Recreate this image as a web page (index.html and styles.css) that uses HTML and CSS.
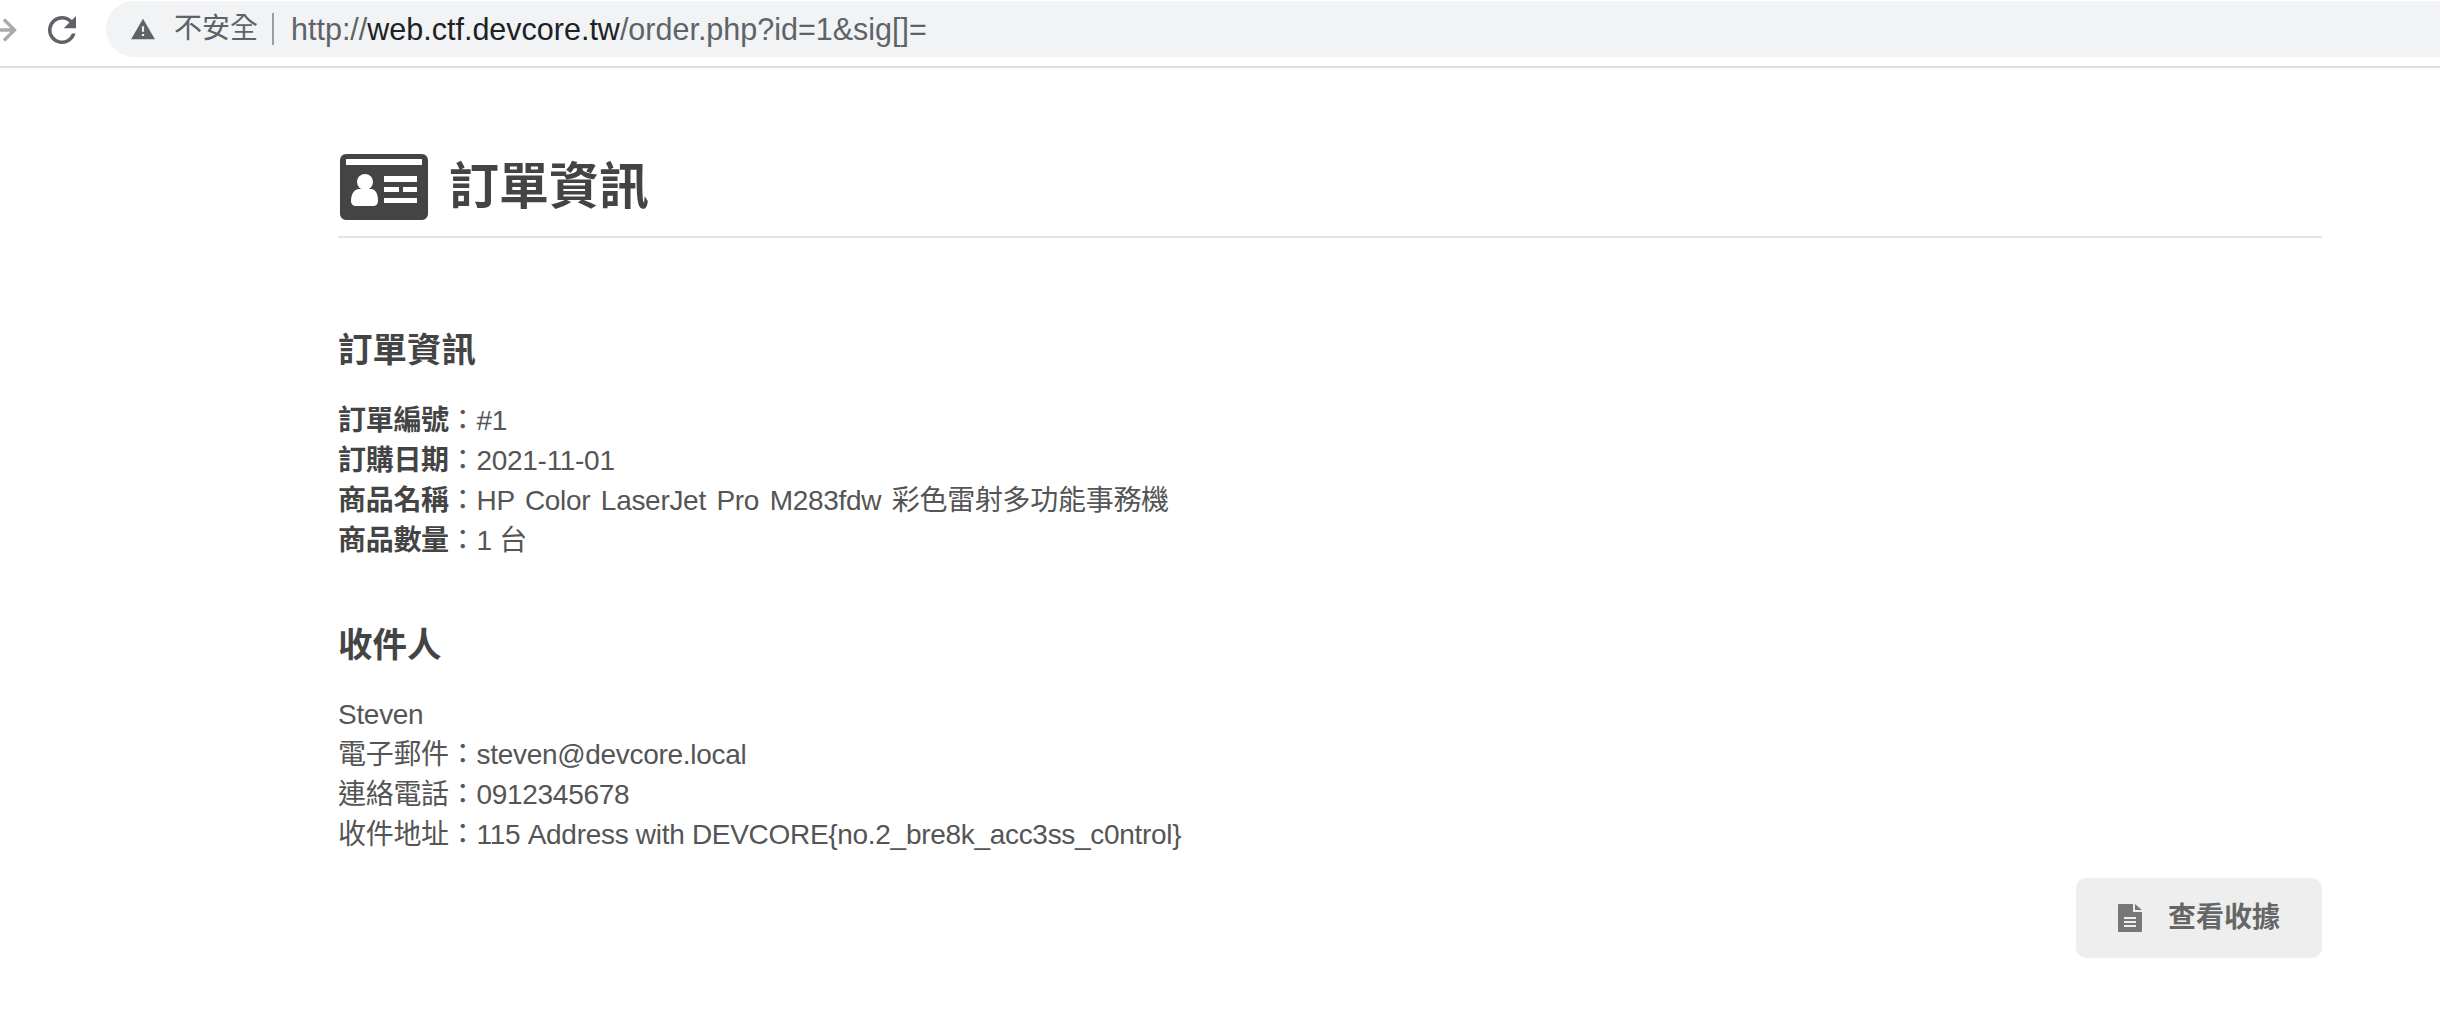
FILE: index.html
```html
<!DOCTYPE html>
<html lang="zh-Hant">
<head>
    <meta charset="UTF-8">
    <title>訂單資訊</title>
    <link rel="stylesheet" href="styles.css">
</head>
<body>
    <div class="toolbar">
        <div class="nav-icons">
            <svg class="forward-icon" viewBox="0 0 24 24" width="36" height="36"><path d="M4 12h15M12 5l7 7-7 7" fill="none" stroke="#aaa" stroke-width="2.2"/></svg>
            <svg class="reload-icon" viewBox="0 0 24 24" width="42" height="42"><path d="M17.65 6.35A7.96 7.96 0 0 0 12 4a8 8 0 1 0 7.73 10h-2.08A6 6 0 1 1 12 6c1.66 0 3.14.69 4.22 1.78L13 11h7V4z" fill="#5f6368"/></svg>
        </div>
        <div class="address-bar">
            <svg class="warn-icon" viewBox="0 0 24 24" width="26" height="26"><path d="M12 2.5 1 21.5h22zM13 18.5h-2v-2h2zM13 14.5h-2v-5h2z" fill="#5f6368"/></svg>
            <span class="not-secure">不安全</span>
            <span class="url"><span class="url-dim">http://</span>web.ctf.devcore.tw<span class="url-dim">/order.php?id=1&amp;sig[]=</span></span>
        </div>
    </div>

    <div class="container">
        <div class="page-title">
            <svg class="card-icon" viewBox="0 0 88 66" width="88" height="66">
                <path fill-rule="evenodd" fill="#444" d="M6 0h76a6 6 0 0 1 6 6v54a6 6 0 0 1-6 6H6a6 6 0 0 1-6-6V6a6 6 0 0 1 6-6zM6 5v6h76V5z"/>
                <circle cx="25" cy="28" r="8" fill="#fff"/>
                <path fill="#fff" d="M11 47c0-8 4-12 8-12h12c4 0 7 4 7 12 0 3-2 5-5 5H16c-3 0-5-2-5-5z"/>
                <path fill="#fff" d="M44 22h33v6H44zM44 33h15v5H44zM63 33h14v5H63zM44 44h33v5H44z"/>
            </svg>
            <h1>訂單資訊</h1>
        </div>

        <h2 class="section-head first">訂單資訊</h2>
        <div class="info">
            <div><b>訂單編號</b>：#1</div>
            <div><b>訂購日期</b>：2021-11-01</div>
            <div class="wide-words"><b>商品名稱</b>：HP Color LaserJet Pro M283fdw 彩色雷射多功能事務機</div>
            <div><b>商品數量</b>：1 台</div>
        </div>

        <h2 class="section-head second">收件人</h2>
        <div class="info">
            <div>Steven</div>
            <div>電子郵件：steven@devcore.local</div>
            <div>連絡電話：0912345678</div>
            <div>收件地址：115 Address with DEVCORE{no.2_bre8k_acc3ss_c0ntrol}</div>
        </div>

        <div class="actions">
            <a class="btn" href="#">
                <svg viewBox="0 0 24 28" width="24" height="28"><path fill="#777" fill-rule="evenodd" d="M1 0h14v8h9v19a1 1 0 0 1-1 1H1a1 1 0 0 1-1-1V1a1 1 0 0 1 1-1zM6 13v2h12v-2zM6 17v2h12v-2zM6 21v2h12v-2z"/><path fill="#777" d="M17 0l7 6h-7z"/></svg>
                <span>查看收據</span>
            </a>
        </div>
    </div>
</body>
</html>
```

FILE: styles.css
```css
body {
    margin: 0;
    background: #fff;
    color: #555;
    font-family: "Liberation Sans", "Noto Sans CJK TC", sans-serif;
    font-size: 28px;
    line-height: 40px;
}
.toolbar {
    display: flex;
    align-items: center;
    height: 66px;
    border-bottom: 2px solid #dfdfe3;
    overflow: hidden;
}
.nav-icons {
    display: flex;
    align-items: center;
    gap: 19px;
    margin-top: -7px;
    margin-left: -14px;
    width: 120px;
    flex-shrink: 0;
}
.address-bar {
    display: flex;
    align-items: center;
    flex: 1;
    height: 56px;
    margin-top: -8px;
    margin-right: -40px;
    padding-left: 24px;
    background: #f1f3f4;
    border-radius: 28px;
}
.not-secure {
    margin-left: 18px;
    padding-right: 14px;
    border-right: 2px solid #9a9ea3;
    line-height: 32px;
    color: #5f6368;
}
.url {
    margin-left: 17px;
    font-size: 30.5px;
    color: #202124;
}
.url-dim {
    color: #5f6368;
}
.container {
    width: 1984px;
    margin-left: 338px;
}
.page-title {
    display: flex;
    align-items: center;
    gap: 21px;
    height: 108px;
    margin-top: 62px;
    padding: 8px 2px 0;
    box-sizing: border-box;
    border-bottom: 2px solid #e4e4e4;
}
.page-title h1 {
    margin: 0;
    font-size: 50px;
    line-height: 66px;
    color: #444;
}
.section-head {
    margin: 0;
    font-size: 34.5px;
    line-height: 44px;
    color: #444;
}
.section-head.first {
    margin: 90px 0 29px;
}
.section-head.second {
    margin: 62px 0 28px;
}
.info {
    letter-spacing: -0.3px;
}
.info b {
    color: #444;
}
.wide-words {
    word-spacing: 3.1px;
}
.actions {
    display: flex;
    justify-content: flex-end;
    margin-top: 23px;
}
.btn {
    display: flex;
    align-items: center;
    gap: 26px;
    height: 80px;
    padding: 0 42px;
    background: #eee;
    border-radius: 10px;
    color: #666;
    font-weight: bold;
    text-decoration: none;
}
```
